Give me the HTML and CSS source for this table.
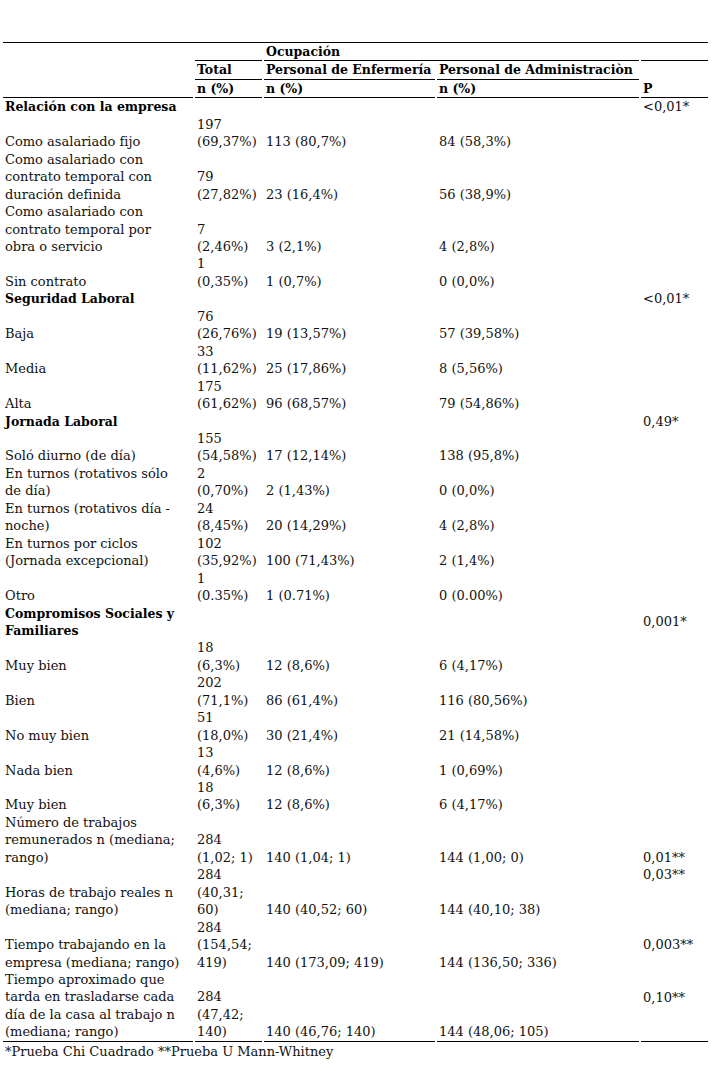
FILE: index.html
```html
<!DOCTYPE html>
<html lang="es">
<head>
<meta charset="utf-8">
<link rel="stylesheet" href="styles.css">
</head>
<body>
<div class="sheet">
  <div class="rule"></div>
  <table class="tbl">
    <colgroup>
      <col class="c-label"><col class="c-total"><col class="c-enf"><col class="c-adm"><col class="c-p">
    </colgroup>
    <thead>
      <tr>
        <th class="hl" rowspan="3"></th>
        <th class="hb"></th>
        <th class="hb" colspan="2">Ocupación</th>
        <th class="hb"></th>
      </tr>
      <tr>
        <th class="hb">Total</th>
        <th class="hb">Personal de Enfermería</th>
        <th class="hb">Personal de Administraciòn</th>
        <th class="hb bottom" rowspan="2">P</th>
      </tr>
      <tr>
        <th class="hb">n (%)</th>
        <th class="hb">n (%)</th>
        <th class="hb">n (%)</th>
      </tr>
    </thead>
    <tbody>
      <tr><td class="sec">Relación con la empresa</td><td></td><td></td><td></td><td class="p-top">&lt;0,01*</td></tr>
      <tr><td>Como asalariado fijo</td><td>197<br>(69,37%)</td><td>113 (80,7%)</td><td>84 (58,3%)</td><td></td></tr>
      <tr><td>Como asalariado con<br>contrato temporal con<br>duración definida</td><td>79<br>(27,82%)</td><td>23 (16,4%)</td><td>56 (38,9%)</td><td></td></tr>
      <tr><td>Como asalariado con<br>contrato temporal por<br>obra o servicio</td><td>7<br>(2,46%)</td><td>3 (2,1%)</td><td>4 (2,8%)</td><td></td></tr>
      <tr><td>Sin contrato</td><td>1<br>(0,35%)</td><td>1 (0,7%)</td><td>0 (0,0%)</td><td></td></tr>
      <tr><td class="sec">Seguridad Laboral</td><td></td><td></td><td></td><td class="p-top">&lt;0,01*</td></tr>
      <tr><td>Baja</td><td>76<br>(26,76%)</td><td>19 (13,57%)</td><td>57 (39,58%)</td><td></td></tr>
      <tr><td>Media</td><td>33<br>(11,62%)</td><td>25 (17,86%)</td><td>8 (5,56%)</td><td></td></tr>
      <tr><td>Alta</td><td>175<br>(61,62%)</td><td>96 (68,57%)</td><td>79 (54,86%)</td><td></td></tr>
      <tr><td class="sec">Jornada Laboral</td><td></td><td></td><td></td><td class="p-top">0,49*</td></tr>
      <tr><td>Soló diurno (de día)</td><td>155<br>(54,58%)</td><td>17 (12,14%)</td><td>138 (95,8%)</td><td></td></tr>
      <tr><td>En turnos (rotativos sólo<br>de día)</td><td>2<br>(0,70%)</td><td>2 (1,43%)</td><td>0 (0,0%)</td><td></td></tr>
      <tr><td>En turnos (rotativos día -<br>noche)</td><td>24<br>(8,45%)</td><td>20 (14,29%)</td><td>4 (2,8%)</td><td></td></tr>
      <tr><td>En turnos por ciclos<br>(Jornada excepcional)</td><td>102<br>(35,92%)</td><td>100 (71,43%)</td><td>2 (1,4%)</td><td></td></tr>
      <tr><td>Otro</td><td>1<br>(0.35%)</td><td>1 (0.71%)</td><td>0 (0.00%)</td><td></td></tr>
      <tr><td class="sec">Compromisos Sociales y<br>Familiares</td><td></td><td></td><td></td><td class="p-mid">0,001*</td></tr>
      <tr><td>Muy bien</td><td>18<br>(6,3%)</td><td>12 (8,6%)</td><td>6 (4,17%)</td><td></td></tr>
      <tr><td>Bien</td><td>202<br>(71,1%)</td><td>86 (61,4%)</td><td>116 (80,56%)</td><td></td></tr>
      <tr><td>No muy bien</td><td>51<br>(18,0%)</td><td>30 (21,4%)</td><td>21 (14,58%)</td><td></td></tr>
      <tr><td>Nada bien</td><td>13<br>(4,6%)</td><td>12 (8,6%)</td><td>1 (0,69%)</td><td></td></tr>
      <tr><td>Muy bien</td><td>18<br>(6,3%)</td><td>12 (8,6%)</td><td>6 (4,17%)</td><td></td></tr>
      <tr><td>Número de trabajos<br>remunerados n (mediana;<br>rango)</td><td>284<br>(1,02; 1)</td><td>140 (1,04; 1)</td><td>144 (1,00; 0)</td><td>0,01**</td></tr>
      <tr><td>Horas de trabajo reales n<br>(mediana; rango)</td><td>284<br>(40,31;<br>60)</td><td>140 (40,52; 60)</td><td>144 (40,10; 38)</td><td class="p-top">0,03**</td></tr>
      <tr><td>Tiempo trabajando en la<br>empresa (mediana; rango)</td><td>284<br>(154,54;<br>419)</td><td>140 (173,09; 419)</td><td>144 (136,50; 336)</td><td class="p-mid">0,003**</td></tr>
      <tr class="last"><td>Tiempo aproximado que<br>tarda en trasladarse cada<br>día de la casa al trabajo n<br>(mediana; rango)</td><td>284<br>(47,42;<br>140)</td><td>140 (46,76; 140)</td><td>144 (48,06; 105)</td><td class="p-mid p-lift">0,10**</td></tr>
    </tbody>
  </table>
  <p class="note">*Prueba Chi Cuadrado **Prueba U Mann-Whitney</p>
</div>
</body>
</html>
```
FILE: styles.css
```css
html, body {
  margin: 0;
  padding: 0;
  background: #ffffff;
}
body {
  font-family: "DejaVu Serif", "Liberation Serif", serif;
  font-size: 13px;
  line-height: 17.45px;
  color: #111111;
}
.sheet {
  padding-top: 42px;
  width: 706px;
  margin-left: 3px;
}
.rule {
  height: 1px;
  background: #000000;
  width: 705px;
}
.tbl {
  table-layout: fixed;
  border-collapse: separate;
  border-spacing: 2px 0;
  margin-left: -2px;
  width: 709px;
}
.c-label { width: 190px; }
.c-total { width: 67px; }
.c-enf { width: 171px; }
.c-adm { width: 202px; }
.c-p { width: 67px; }
.tbl th,
.tbl td {
  padding: 0 0 0 2px;
  white-space: nowrap;
  vertical-align: bottom;
  text-align: left;
  overflow: visible;
}
.tbl th {
  font-weight: bold;
  font-size: 12.5px;
  color: #000000;
}
.tbl th.hb,
.tbl th.hl {
  border-bottom: 1px solid #000000;
}
.tbl td.sec {
  font-weight: bold;
  font-size: 12.5px;
  color: #000000;
}
.tbl td.p-top { vertical-align: top; }
.tbl td.p-mid { vertical-align: middle; }
.tbl td.p-lift { padding-bottom: 17px; }
.tbl tr.last td {
  border-bottom: 1px solid #000000;
}
.note {
  margin: 1px 0 0 2px;
}
```
